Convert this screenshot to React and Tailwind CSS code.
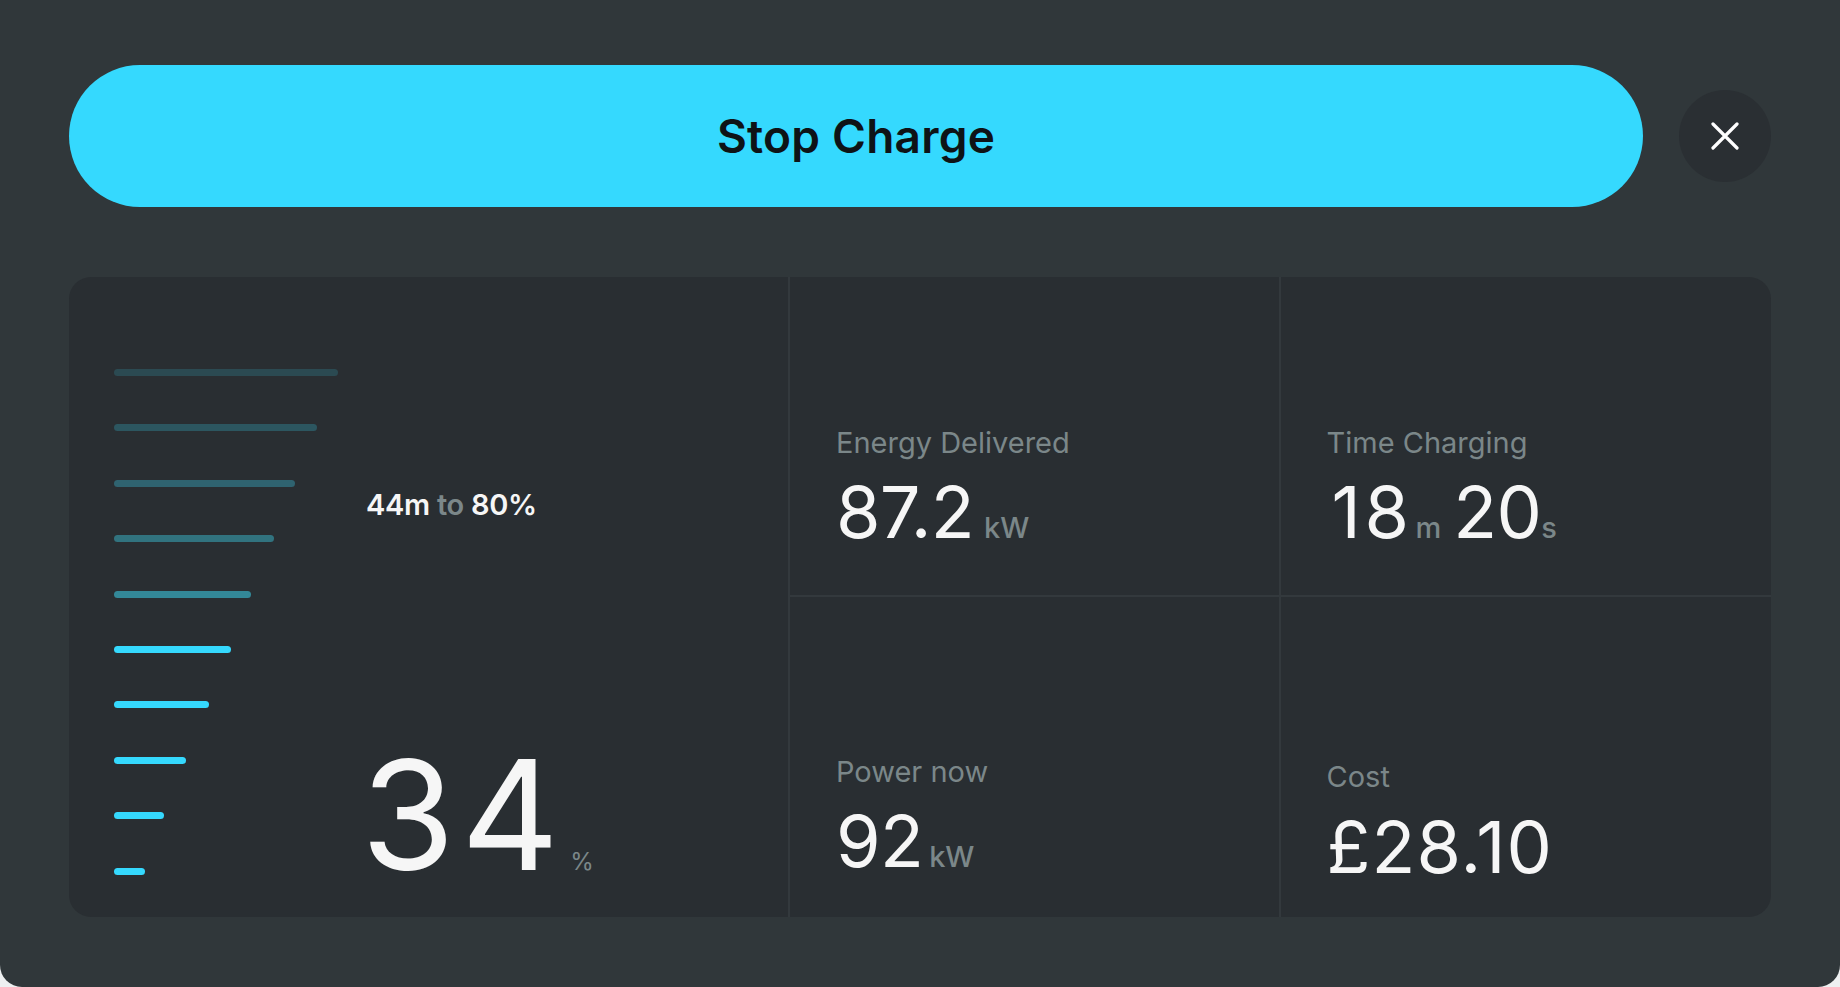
import React from "react";

const bars = [
  { w: 224, c: "bg-[#2b4a52]" },
  { w: 203, c: "bg-[#2c5660]" },
  { w: 181, c: "bg-[#2f6370]" },
  { w: 160, c: "bg-[#31737f]" },
  { w: 137, c: "bg-[#338898]" },
  { w: 117, c: "bg-[#35d9fe]" },
  { w: 95, c: "bg-[#35d9fe]" },
  { w: 72, c: "bg-[#35d9fe]" },
  { w: 50, c: "bg-[#35d9fe]" },
  { w: 31, c: "bg-[#35d9fe]" },
];

function Stat({ label, children, pb, gap, track = "tracking-[-0.01em]" }) {
  return (
    <div className={`flex flex-col justify-end pl-[46px] ${pb}`}>
      <div className="text-[29px] leading-none text-[#7b8789]">{label}</div>
      <div className={`flex items-baseline ${gap} text-[72px] leading-none text-[#f6f6f6] ${track}`}>
        {children}
      </div>
    </div>
  );
}

function Unit({ children, ml = "ml-[10px]", mr = "" }) {
  return (
    <span className={`${ml} ${mr} text-[29px] font-medium leading-none text-[#7b8789] tracking-normal`}>
      {children}
    </span>
  );
}

export default function App() {
  return (
    <div className="w-[1840px] h-[987px] bg-[#eef0f1]" style={{ fontFamily: "Inter, 'Noto Sans', sans-serif" }}>
      <div className="w-full h-full bg-[#30373a] rounded-b-[22px] px-[69px] pt-[65px] flex flex-col">
        <div className="flex items-center gap-[36px] h-[142px]">
          <button className="flex-1 h-[142px] rounded-full bg-[#35d9fe] flex items-center justify-center text-[46px] font-semibold text-[#0e1316] tracking-[0.005em]">
            Stop Charge
          </button>
          <div className="w-[92px] h-[92px] rounded-full bg-[#2a2f33] flex items-center justify-center">
            <svg width="28" height="28" viewBox="0 0 28 28" fill="none">
              <path d="M2 2 L26 26 M26 2 L2 26" stroke="#ffffff" strokeWidth="3.2" strokeLinecap="round" />
            </svg>
          </div>
        </div>

        <div className="mt-[70px] h-[640px] rounded-[22px] bg-[#292e32] grid grid-cols-[721px_1fr_1fr] grid-rows-[320px_320px] overflow-hidden">
          <div className="row-span-2 border-r-2 border-[#33393d] flex pl-[45px] pt-[92px] pb-[26px]">
            <div className="w-[224px] flex flex-col gap-[48.4px] pb-[16px]">
              {bars.map((b, i) => (
                <div key={i} className={`h-[7px] rounded-full ${b.c}`} style={{ width: b.w }} />
              ))}
            </div>
            <div className="ml-[28px] flex flex-col justify-between">
              <div className="mt-[121px] text-[29px] font-semibold leading-none text-[#f6f6f6] tracking-[-0.01em]">
                44m <span className="text-[#7b8789]">to</span> 80%
              </div>
              <div className="flex items-baseline leading-none">
                <span className="-ml-[5px] text-[152px] leading-none text-[#f6f6f6] tracking-[0.04em]">34</span>
                <span className="ml-[5px] text-[24px] leading-none text-[#7b8789]">%</span>
              </div>
            </div>
          </div>

          <div className="border-r-2 border-b-2 border-[#33393d] flex flex-col justify-end">
            <Stat label="Energy Delivered" pb="pb-[47px]" gap="mt-[19px]">
              87.2<Unit>kW</Unit>
            </Stat>
          </div>
          <div className="border-b-2 border-[#33393d] flex flex-col justify-end">
            <Stat label="Time Charging" pb="pb-[47px]" gap="mt-[19px]">
              <span className="ml-[5px] tracking-[0.05em]">18</span>
              <Unit ml="ml-[3px]" mr="mr-[12px]">m</Unit>
              <span>20</span>
              <Unit ml="ml-0">s</Unit>
            </Stat>
          </div>
          <div className="border-r-2 border-[#33393d] flex flex-col justify-end">
            <Stat label="Power now" pb="pb-[40px]" gap="mt-[19px]">
              92<Unit ml="ml-[6px]">kW</Unit>
            </Stat>
          </div>
          <div className="flex flex-col justify-end">
            <Stat label="Cost" pb="pb-[34px]" gap="mt-[20px]" track="tracking-[0.015em]">
              £28.10
            </Stat>
          </div>
        </div>
      </div>
    </div>
  );
}
